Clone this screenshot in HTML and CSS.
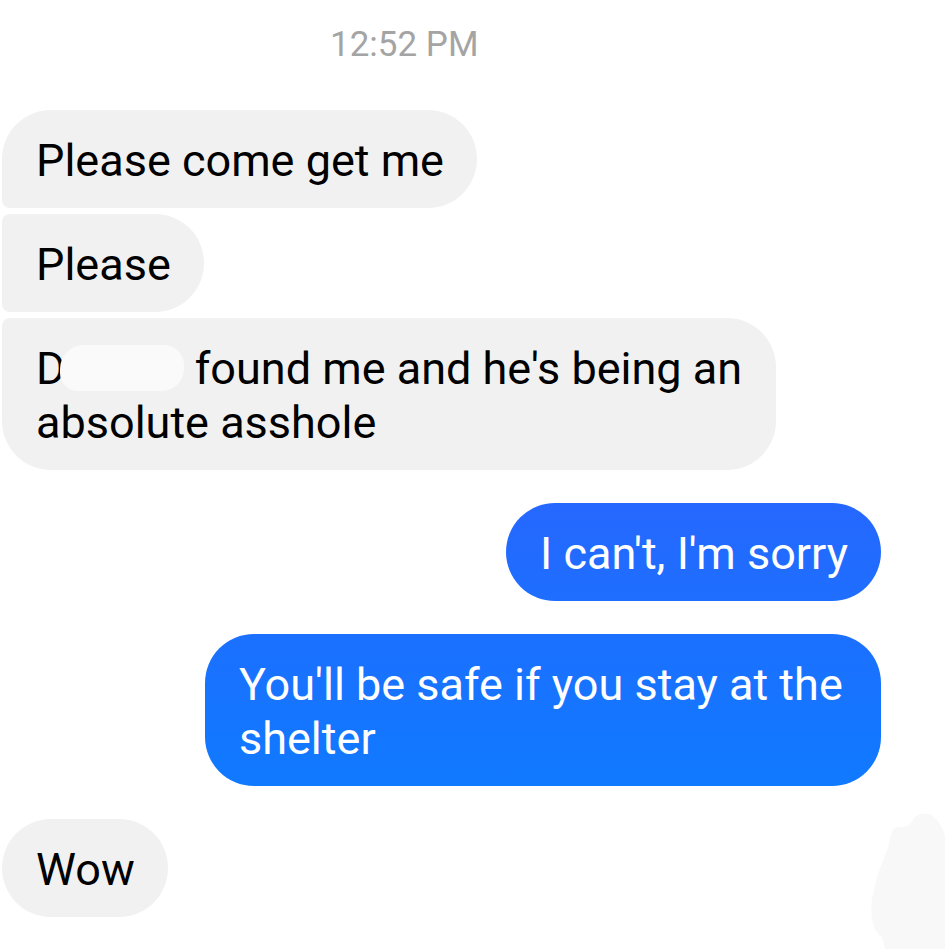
FILE: index.html
```html
<!DOCTYPE html>
<html lang="en">
<head>
    <meta charset="UTF-8">
    <meta name="viewport" content="width=device-width, initial-scale=1.0">
    <title>Chat</title>
    <link rel="stylesheet" href="styles.css">
</head>
<body>
    <div class="chat">
        <div class="timestamp">12:52 PM</div>

        <div class="group them">
            <div class="bubble first">Please come get me</div>
            <div class="bubble middle">Please</div>
            <div class="bubble last">D<span class="redact"></span> found me and he's being an absolute asshole</div>
        </div>

        <div class="group me">
            <div class="bubble">I can't, I'm sorry</div>
        </div>

        <div class="group me">
            <div class="bubble">You'll be safe if you stay at the shelter</div>
        </div>

        <div class="group them">
            <div class="bubble">Wow</div>
        </div>
    </div>

    <!-- seen avatar, scribbled out -->
    <svg class="seen-cover" width="80" height="139" viewBox="0 0 80 139">
        <path d="M20 139 L17 127 C5 120 5 95 8 85 C12 60 22 45 25 30 C26 20 30 16 37 17 C42 17 44 15 48 10 C52 3 60 3 66 5 C74 10 80 20 80 30 L80 139 Z" fill="#f8f8f8"/>
    </svg>
</body>
</html>
```

FILE: styles.css
```css
body {
    font-family: Roboto, "Noto Sans", sans-serif;
    background-color: #fff;
    margin: 0;
    padding: 0;
}

.chat {
    padding: 25px 64px 0 2px;
}

.timestamp {
    font-size: 35px;
    line-height: 40px;
    color: #a4a4a4;
    padding-left: 328px;
    margin-bottom: 45px;
}

.group {
    display: flex;
    flex-direction: column;
    gap: 6px;
    margin-bottom: 33px;
}

.group.them {
    align-items: flex-start;
}

.group.me {
    align-items: flex-end;
}

.bubble {
    font-size: 45px;
    line-height: 54px;
    padding: 24px 33px 20px 34px;
    box-sizing: border-box;
    border-radius: 49px;
}

.them .bubble {
    max-width: 774px;
    background-color: #f1f1f1;
    color: #000;
}

.them .bubble.first {
    border-radius: 49px 49px 49px 8px;
}

.them .bubble.middle {
    border-radius: 8px 49px 49px 8px;
}

.them .bubble.last {
    border-radius: 8px 49px 49px 49px;
}

.me .bubble {
    max-width: 676px;
    color: #fff;
    background: linear-gradient(to bottom, #4d48ff, #0384ff) fixed;
}

.redact {
    display: inline-block;
    width: 124px;
    height: 46px;
    margin-left: -6px;
    vertical-align: -7px;
    background-color: #fafafa;
    border-radius: 24px 20px 22px 18px;
}

.seen-cover {
    position: absolute;
    left: 865px;
    top: 810px;
}
```
